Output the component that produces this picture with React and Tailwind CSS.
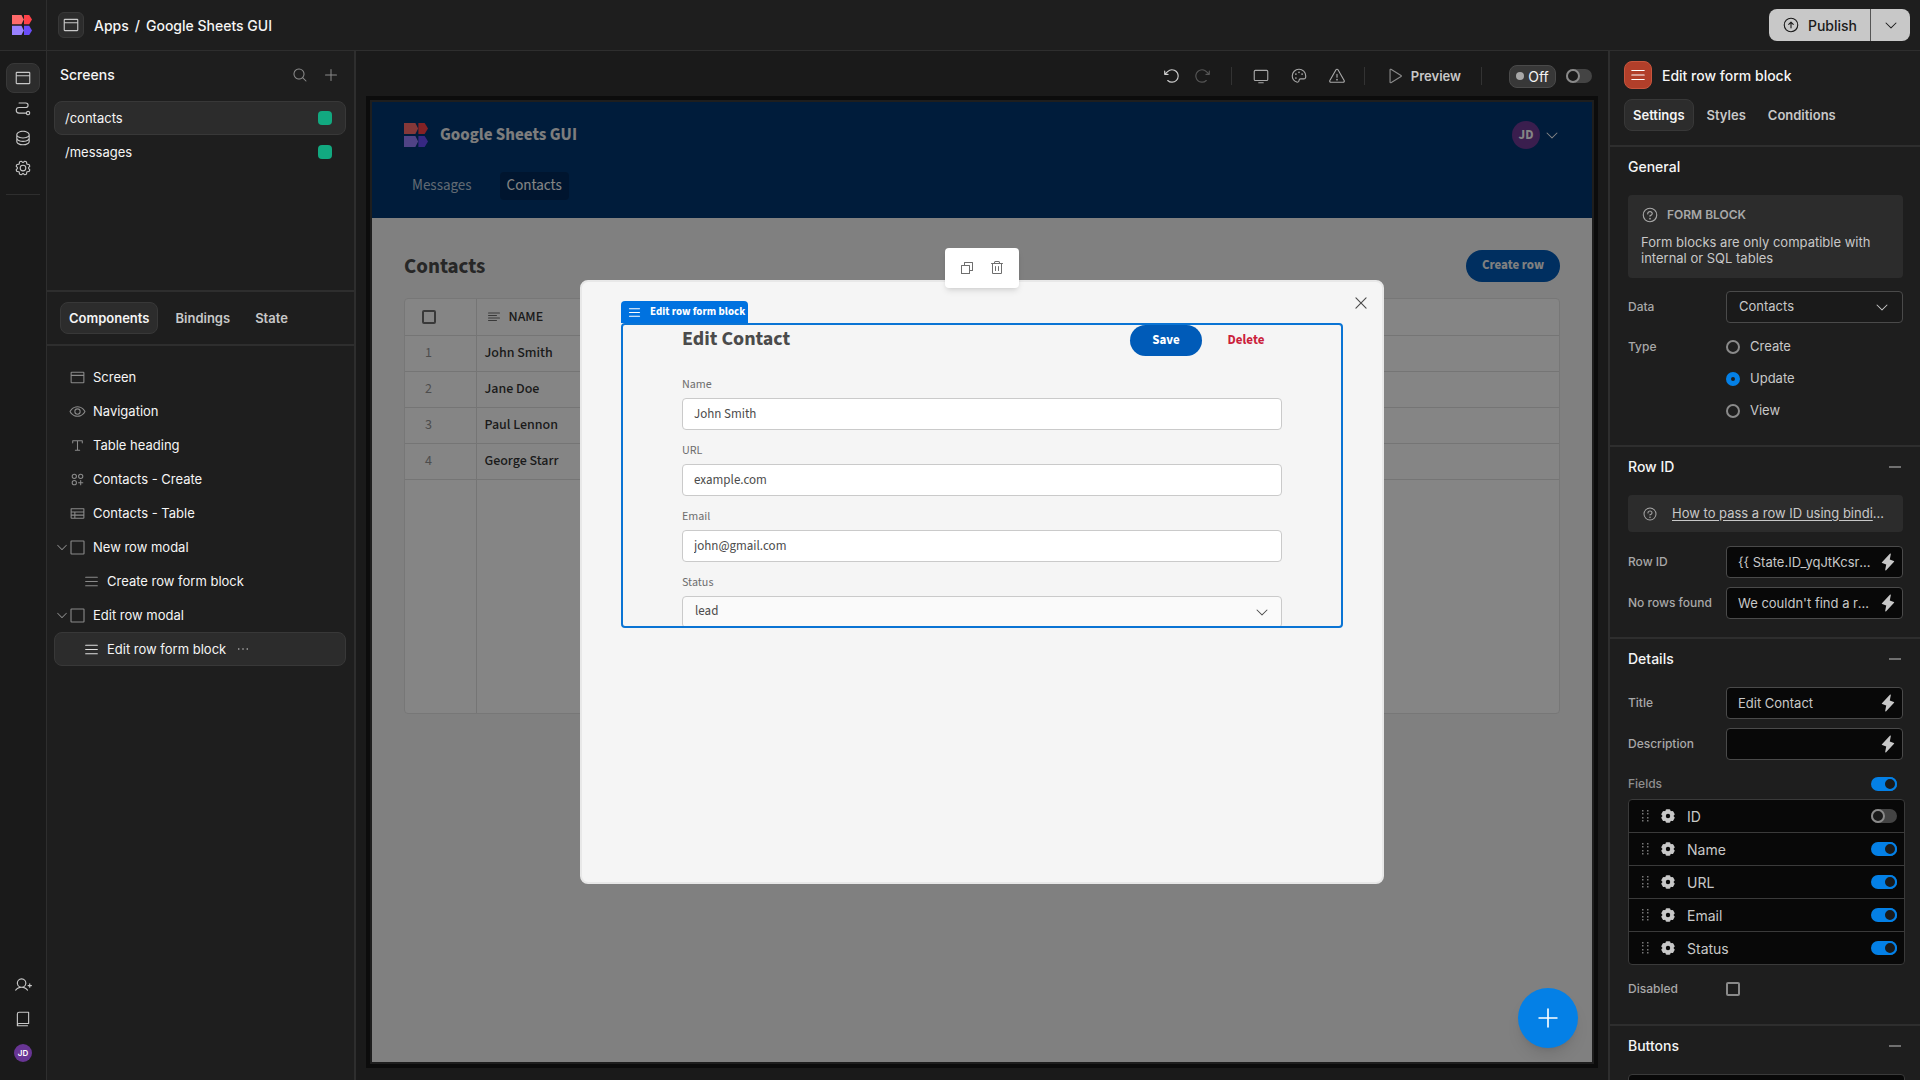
import React from 'react';
import {
  PiArrowCircleUp,
  PiArrowClockwise,
  PiArrowCounterClockwise,
  PiBook,
  PiBrowser,
  PiCaretDown,
  PiCirclesThreePlus,
  PiCopy,
  PiDatabase,
  PiDotsThree,
  PiEye,
  PiGear,
  PiLightningFill,
  PiList,
  PiMagnifyingGlass,
  PiMonitor,
  PiPalette,
  PiPath,
  PiPlay,
  PiPlus,
  PiQuestion,
  PiTable,
  PiTextAlignLeft,
  PiTextT,
  PiTrash,
  PiUserPlus,
  PiWarning,
  PiX,
} from 'react-icons/pi';

const Square = ({ className }) => (
  <svg viewBox="0 0 17 17" className={className} fill="none" stroke="currentColor" aria-hidden="true">
    <rect x="2" y="2" width="13" height="13" rx="0.5" strokeWidth="1.1" />
  </svg>
);

const screens = ['/contacts', '/messages'];

const tree = [
  { label: 'Screen', icon: PiBrowser },
  { label: 'Navigation', icon: PiEye },
  { label: 'Table heading', icon: PiTextT },
  { label: 'Contacts - Create', icon: PiCirclesThreePlus },
  { label: 'Contacts - Table', icon: PiTable },
  { label: 'New row modal', icon: Square, open: true },
  { label: 'Create row form block', icon: PiList, child: true },
  { label: 'Edit row modal', icon: Square, open: true },
  { label: 'Edit row form block', icon: PiList, child: true, selected: true },
];

const rows = ['John Smith', 'Jane Doe', 'Paul Lennon', 'George Starr'];

const formFields = [
  { id: 'name', label: 'Name', value: 'John Smith' },
  { id: 'url', label: 'URL', value: 'example.com' },
  { id: 'email', label: 'Email', value: 'john@gmail.com' },
];

const fields = [
  { name: 'ID', on: false },
  { name: 'Name', on: true },
  { name: 'URL', on: true },
  { name: 'Email', on: true },
  { name: 'Status', on: true },
];

const Logo = ({ className }) => (
  <svg viewBox="0 0 20 20" preserveAspectRatio="none" className={className} aria-hidden="true">
    <path d="M0 0h9.5l2.3 4.6-2.3 4.6H0z" fill="#ff6b6b" />
    <path d="M12 0h5.2L20 4.6l-2.8 4.6H12z" fill="#ff4148" />
    <path d="M0 10.8h9.5l2.3 4.6L9.5 20H0z" fill="#9981ff" />
    <path d="M12 10.8h5.2l2.8 4.6-2.8 4.6H12z" fill="#6a4dfa" />
  </svg>
);

const Cog = () => (
  <svg viewBox="0 0 14 14" className="h-[14px] w-[14px] text-[#c8c8c8]" aria-hidden="true">
    <g fill="currentColor">
      <rect x="4.6" y="0.2" width="4.8" height="13.6" rx="1.2" />
      <rect x="4.6" y="0.2" width="4.8" height="13.6" rx="1.2" transform="rotate(60 7 7)" />
      <rect x="4.6" y="0.2" width="4.8" height="13.6" rx="1.2" transform="rotate(120 7 7)" />
      <circle cx="7" cy="7" r="5.7" />
    </g>
    <circle cx="7" cy="7" r="2.2" fill="#080808" />
  </svg>
);

const DragHandle = () => (
  <svg viewBox="0 0 8 12" className="h-3 w-2" fill="#777777" aria-hidden="true">
    {[1, 4, 8, 11].map((y) => (
      <g key={y}>
        <rect x="1" y={y - 1} width="1.5" height="1.5" />
        <rect x="6" y={y - 1} width="1.5" height="1.5" />
      </g>
    ))}
  </svg>
);

const Toggle = ({ label, on = false }) => (
  <input
    type="checkbox"
    role="switch"
    aria-label={label}
    defaultChecked={on}
    className="flex h-[14px] w-[26px] shrink-0 appearance-none items-center rounded-full bg-[#444444] before:h-[14px] before:w-[14px] before:rounded-full before:border-2 before:border-[#8a8a8a] before:bg-[#1a1a1a] checked:justify-end checked:bg-[#0480e6] checked:before:border-[#0480e6]"
  />
);

const RailButton = ({ label, icon: Icon }) => (
  <button aria-label={label} className="flex h-[30px] w-[34px] items-center justify-center text-[#c8c8c8]">
    <Icon className="h-[18px] w-[18px]" />
  </button>
);

const Rail = () => (
  <nav className="flex w-[47px] shrink-0 flex-col items-center border-r border-[#2e2e2e] bg-[#1a1a1a] pt-3 pb-3">
    <button
      aria-label="Design"
      className="flex h-[30px] w-[34px] items-center justify-center rounded-lg border border-[#383838] bg-[#2c2c2c] text-[#c8c8c8]"
    >
      <PiBrowser className="h-[18px] w-[18px]" />
    </button>
    <RailButton label="Automations" icon={PiPath} />
    <RailButton label="Data" icon={PiDatabase} />
    <RailButton label="Settings" icon={PiGear} />
    <div className="mt-[11px] h-px w-[34px] bg-[#2e2e2e]" />
    <div className="mt-auto flex flex-col items-center gap-1">
      <RailButton label="Invite users" icon={PiUserPlus} />
      <RailButton label="Docs" icon={PiBook} />
      <button aria-label="Account" className="flex h-[30px] w-[34px] items-center justify-center">
        <span className="flex h-[18px] w-[18px] items-center justify-center rounded-full bg-[#683594] text-[8px] font-semibold text-white">
          JD
        </span>
      </button>
    </div>
  </nav>
);

const TopBar = () => (
  <header className="flex h-[51px] shrink-0 border-b border-[#2e2e2e]">
    <div className="flex w-[47px] shrink-0 items-center justify-center border-r border-[#2e2e2e]">
      <Logo className="mr-[3px] h-5 w-5" />
    </div>
    <div className="flex flex-1 items-center pr-[10px] pl-[11px]">
      <button
        aria-label="App home"
        className="flex h-[26px] w-[26px] items-center justify-center rounded-md border border-[#383838] bg-[#2c2c2c] text-[#c8c8c8]"
      >
        <PiBrowser className="h-[18px] w-[18px]" />
      </button>
      <div className="ml-[10px] flex gap-[6px] text-[14px] font-medium text-[#f5f5f5]">
        <a href="#apps">Apps</a>
        <span>/</span>
        <span>Google Sheets GUI</span>
      </div>
      <div className="ml-auto flex h-8 overflow-hidden rounded-lg bg-[#c8c8c8] text-[#1a1a1a]">
        <button className="flex w-[102px] items-center justify-center gap-2 border-r border-[#555555] text-[14px] font-medium">
          <PiArrowCircleUp className="h-[18px] w-[18px]" />
          Publish
        </button>
        <button aria-label="Publish options" className="flex w-[39px] items-center justify-center">
          <PiCaretDown className="h-4 w-4" />
        </button>
      </div>
    </div>
  </header>
);

const LeftPanel = () => (
  <aside className="flex w-[309px] shrink-0 flex-col border-r-2 border-[#2e2e2e]">
    <section className="h-[241px] border-b-2 border-[#2e2e2e] pr-2 pl-[7px]">
      <div className="mb-[3px] flex h-[47px] items-center pr-[7px] pl-[6px]">
        <h2 className="text-[14px] font-medium text-[#f5f5f5]">Screens</h2>
        <button aria-label="Search screens" className="ml-auto text-[#8a8a8a]">
          <PiMagnifyingGlass className="h-4 w-4" />
        </button>
        <button aria-label="Add screen" className="ml-[15px] text-[#8a8a8a]">
          <PiPlus className="h-4 w-4" />
        </button>
      </div>
      {screens.map((screen, i) => (
        <a
          key={screen}
          href="#screen"
          className={`flex h-[34px] items-center justify-between rounded-lg border pr-[13px] pl-[10px] text-[13px] leading-5 text-[#f5f5f5] ${
            i === 0 ? 'border-[#383838] bg-[#2c2c2c]' : 'border-transparent'
          }`}
        >
          {screen}
          <span className="h-[14px] w-[14px] rounded bg-[#12a980]" />
        </a>
      ))}
    </section>
    <div className="flex h-[54px] shrink-0 items-center gap-[10px] border-b-2 border-[#2e2e2e] pl-[13px] text-[13px] leading-5 font-semibold">
      <button className="h-8 rounded-lg border border-[#383838] bg-[#2c2c2c] px-2 text-[#f5f5f5]">Components</button>
      <button className="h-8 px-[7px] text-[#c8c8c8]">Bindings</button>
      <button className="h-8 px-2 text-[#c8c8c8]">State</button>
    </div>
    <div className="pt-[14px] pr-2 pl-[7px]">
      {tree.map(({ label, icon: Icon, open, child, selected }) => (
        <div
          key={label}
          className={`flex h-[34px] items-center rounded-lg border text-[13px] leading-5 text-[#f5f5f5] ${
            selected ? 'border-[#383838] bg-[#2c2c2c]' : 'border-transparent'
          } ${child ? 'pl-[14px]' : ''}`}
        >
          <span className="flex w-[14px] justify-center text-[#8a8a8a]">
            {open && <PiCaretDown className="h-[14px] w-[14px]" />}
          </span>
          <Icon className={`h-[17px] w-[17px] ${selected ? 'text-[#e0e0e0]' : 'text-[#8a8a8a]'}`} />
          <span className="ml-[7px]">{label}</span>
          {selected && (
            <button aria-label="More" className="ml-[9px] text-[#c8c8c8]">
              <PiDotsThree className="h-4 w-4" />
            </button>
          )}
        </div>
      ))}
    </div>
  </aside>
);

const CanvasToolbar = () => (
  <div className="flex h-[45px] shrink-0 items-center justify-end pt-[5px] pr-4 text-[#a8a8a8]">
    <button aria-label="Undo" className="text-[#d0d0d0]">
      <PiArrowCounterClockwise className="h-[18px] w-[18px]" />
    </button>
    <button aria-label="Redo" className="ml-3 text-[#555555]">
      <PiArrowClockwise className="h-[18px] w-[18px]" />
    </button>
    <div className="mx-5 h-[18px] w-px bg-[#333333]" />
    <div className="flex gap-5">
      <button aria-label="Device preview"><PiMonitor className="h-[18px] w-[18px]" /></button>
      <button aria-label="Theme"><PiPalette className="h-[18px] w-[18px]" /></button>
      <button aria-label="Errors"><PiWarning className="h-[18px] w-[18px]" /></button>
    </div>
    <div className="mr-5 ml-[18px] h-[18px] w-px bg-[#333333]" />
    <button className="flex items-center gap-2 text-[13px] leading-5 font-semibold text-[#c8c8c8]">
      <PiPlay className="h-[18px] w-[18px] text-[#8a8a8a]" />
      Preview
    </button>
    <div className="mr-[27px] ml-5 h-[18px] w-px bg-[#333333]" />
    <span className="flex h-[23px] w-[47px] items-center justify-center gap-1 rounded-lg border border-[#4a4a4a] bg-[#383838] text-[14px] text-[#f5f5f5]">
      <span className="h-2 w-2 rounded-full bg-[#a8a8a8]" />
      Off
    </span>
    <div className="ml-[10px] flex"><Toggle label="Development data" /></div>
  </div>
);

const ContactsTable = () => (
  <div className="mt-4 h-[416px] overflow-hidden rounded border border-[#e4e4e4] bg-white">
    <table className="h-full w-full border-collapse text-left text-[14px] leading-5 text-[#323232]">
      <thead>
        <tr className="h-9 border-b border-[#e1e1e1]">
          <th className="w-[71px] border-r border-[#e1e1e1] pl-[17px]">
            <input
              type="checkbox"
              aria-label="Select all rows"
              className="block h-[14px] w-[14px] appearance-none rounded-[2px] border-2 border-[#6e6e6e]"
            />
          </th>
          <th className="pl-[9px] font-medium">
            <span className="flex items-center gap-[7px]">
              <PiTextAlignLeft className="h-4 w-4 text-[#6e6e6e]" />
              NAME
            </span>
          </th>
        </tr>
      </thead>
      <tbody>
        {rows.map((name, i) => (
          <tr key={name} className="h-9 border-b border-[#e1e1e1]">
            <td className="border-r border-[#e1e1e1] pl-5 text-[#959595]">{i + 1}</td>
            <td className="pl-2 font-medium">{name}</td>
          </tr>
        ))}
        <tr>
          <td className="border-r border-[#e1e1e1]" />
          <td />
        </tr>
      </tbody>
    </table>
  </div>
);

const EditModal = () => (
  <div role="dialog" aria-label="Edit row modal" className="relative mt-[178px] h-[604px] w-[804px] rounded-lg border-2 border-[#e8e8e8] bg-[#f5f5f5]">
    <div className="absolute -top-[34px] left-1/2 flex h-10 w-[74px] -translate-x-1/2 items-center justify-center gap-[14px] rounded bg-white text-[#6e6e6e] shadow-md">
      <button aria-label="Duplicate"><PiCopy className="h-4 w-4" /></button>
      <button aria-label="Delete component"><PiTrash className="h-4 w-4" /></button>
    </div>
    <button aria-label="Close" className="absolute top-3 right-3 text-[#4b4b4b]">
      <PiX className="h-[18px] w-[18px]" />
    </button>
    <div className="mx-[39px] mt-[41px] h-[305px] rounded border-2 border-[#0a74d4]">
      <div className="absolute top-[19px] left-[39px] flex h-[22px] items-center gap-2 rounded-t bg-[#0072e0] pr-[3px] pl-[6px] text-[11px] leading-[22px] font-bold text-white">
        <PiList className="h-[15px] w-[15px]" />
        Edit row form block
      </div>
      <form className="h-full overflow-hidden px-[59px]">
        <div className="flex h-[31px]">
          <h3 className="flex-1 text-[20px] leading-7 font-bold text-[#4b4b4b]">Edit Contact</h3>
          <button type="button" className="w-[72px] rounded-full bg-[#005bb8] pb-[2px] text-[13px] leading-5 font-bold text-white">Save</button>
          <button type="button" className="ml-2 w-[72px] pb-[2px] text-[13px] leading-5 font-bold text-[#cb1f3c]">Delete</button>
        </div>
        <div className="mt-[18px] flex flex-col gap-[10px]">
          {formFields.map((field) => (
            <div key={field.id}>
              <label htmlFor={field.id} className="block h-6 text-[12px] leading-[22px] text-[#6e6e6e]">{field.label}</label>
              <input
                id={field.id}
                defaultValue={field.value}
                className="block h-8 w-full rounded border border-[#cacaca] bg-white px-[11px] text-[13px] text-[#4b4b4b]"
              />
            </div>
          ))}
          <div>
            <label htmlFor="status" className="block h-6 text-[12px] leading-[22px] text-[#6e6e6e]">Status</label>
            <div className="relative">
              <select
                id="status"
                className="block h-8 w-full appearance-none rounded border border-[#cacaca] bg-[#fafafa] px-3 text-[13px] text-[#4b4b4b]"
              >
                <option>lead</option>
              </select>
              <PiCaretDown className="pointer-events-none absolute top-2 right-3 h-4 w-4 text-[#4b4b4b]" />
            </div>
          </div>
        </div>
      </form>
    </div>
  </div>
);

const Canvas = () => (
  <main className="flex min-w-0 flex-1 flex-col bg-[#1a1a1a]">
    <CanvasToolbar />
    <div className="mx-[10px] mb-3 flex flex-1 border-4 border-[#0c0c0c] bg-[#1e1e1e] p-[2px]">
      <div className="relative flex-1 overflow-hidden bg-[#f5f5f5] font-['Source_Sans_3','Noto_Sans_CJK_SC',sans-serif]">
        <div className="h-[116px] bg-[#003671] px-8 pt-[18px] text-white">
          <div className="flex h-[30px] items-center">
            <Logo className="h-6 w-6" />
            <h1 className="ml-3 text-[17px] leading-[30px] font-bold text-[#f0f0f0]">Google Sheets GUI</h1>
            <button aria-label="User menu" className="ml-auto flex items-center gap-1">
              <span className="flex h-7 w-7 items-center justify-center rounded-full bg-[#6f3a96] text-[13px] leading-7 font-bold">JD</span>
              <PiCaretDown className="h-4 w-4" />
            </button>
          </div>
          <nav className="mt-[22px] flex gap-5 text-[15px] leading-7">
            <a href="#messages" className="px-2 text-[#bccbdc]">Messages</a>
            <a href="#contacts" className="rounded bg-[#002a5a] px-[7px]">Contacts</a>
          </nav>
        </div>
        <div className="px-8 pt-8">
          <div className="flex h-8 items-center justify-between">
            <h2 className="text-[21px] leading-8 font-bold text-[#4b4b4b]">Contacts</h2>
            <button className="h-8 w-[94px] rounded-full bg-[#005bb8] pb-[2px] text-[13px] leading-5 font-bold text-[#f5f5f5]">Create row</button>
          </div>
          <ContactsTable />
        </div>
        <div className="absolute inset-0 flex items-start justify-center bg-black/48">
          <EditModal />
        </div>
        <button
          aria-label="Add component"
          className="absolute right-[14px] bottom-[14px] flex h-[60px] w-[60px] items-center justify-center rounded-full bg-[#0480e6] text-white shadow-lg"
        >
          <PiPlus className="h-[26px] w-[26px]" />
        </button>
      </div>
    </div>
  </main>
);

const Section = ({ title, children, collapsible = true, className }) => (
  <section className={`border-b-2 border-[#2e2e2e] pr-[17px] pl-[18px] ${className}`}>
    <div className="flex h-10 items-center justify-between">
      <h3 className="text-[14px] leading-5 font-medium text-[#f5f5f5]">{title}</h3>
      {collapsible && (
        <button aria-label={`Collapse ${title}`} className="flex h-4 w-4 items-center justify-center">
          <span className="h-[2px] w-3 bg-[#707070]" />
        </button>
      )}
    </div>
    {children}
  </section>
);

const BindableInput = ({ id, label, value }) => (
  <div className="flex h-8 items-center">
    <label htmlFor={id} className="w-[98px] shrink-0 text-[12px] font-medium text-[#a8a8a8]">{label}</label>
    <div className="flex h-full min-w-0 flex-1 items-center rounded border border-[#4a4a4a] bg-[#080808] pr-[5px]">
      <input id={id} defaultValue={value} className="h-full min-w-0 flex-1 truncate bg-transparent pl-[11px] text-[13px] text-[#c8c8c8]" />
      <button aria-label={`Bind ${label}`} className="ml-2 text-[#c8c8c8]">
        <PiLightningFill className="h-[18px] w-[18px]" />
      </button>
    </div>
  </div>
);

const RightPanel = () => (
  <aside className="flex w-[312px] shrink-0 flex-col overflow-hidden border-l-2 border-[#2e2e2e]">
    <div className="h-24 shrink-0 border-b-2 border-[#2e2e2e] px-[14px] pt-[10px]">
      <div className="flex h-7 items-center">
        <span className="flex h-7 w-7 items-center justify-center rounded-lg border border-[#c8553d] bg-[#b23f2a] text-white">
          <PiList className="h-[18px] w-[18px]" />
        </span>
        <h2 className="ml-[10px] text-[14px] font-medium text-[#f5f5f5]">Edit row form block</h2>
      </div>
      <div className="mt-[10px] flex gap-1 text-[13px] leading-5 font-semibold">
        <button className="h-8 rounded-lg border border-[#383838] bg-[#2c2c2c] px-2 text-[#f5f5f5]">Settings</button>
        <button className="h-8 px-[9px] text-[#c8c8c8]">Styles</button>
        <button className="h-8 px-[9px] text-[#c8c8c8]">Conditions</button>
      </div>
    </div>

    <Section title="General" collapsible={false} className="h-[300px] shrink-0">
      <div className="mt-2 rounded bg-[#2c2c2c] px-[13px] pt-[11px] pb-3">
        <p className="flex items-center gap-2 text-[12px] font-semibold text-[#a8a8a8]">
          <PiQuestion className="h-[18px] w-[18px]" />
          FORM BLOCK
        </p>
        <p className="mt-[10px] text-[13px] leading-4 text-[#c8c8c8]">Form blocks are only compatible with internal or SQL tables</p>
      </div>
      <div className="mt-[13px] flex h-8 items-center">
        <label htmlFor="data" className="w-[98px] shrink-0 text-[12px] font-medium text-[#a8a8a8]">Data</label>
        <div className="relative flex-1">
          <select id="data" className="block h-8 w-full appearance-none rounded border border-[#4a4a4a] bg-[#1a1a1a] px-3 text-[13px] text-[#c8c8c8]">
            <option>Contacts</option>
          </select>
          <PiCaretDown className="pointer-events-none absolute top-2 right-[13px] h-4 w-4 text-[#c8c8c8]" />
        </div>
      </div>
      <fieldset className="mt-2 flex">
        <legend className="float-left w-[98px] text-[12px] leading-8 font-medium text-[#a8a8a8]">Type</legend>
        <div>
          {['Create', 'Update', 'View'].map((type) => (
            <label key={type} className="flex h-8 items-center gap-[10px] text-[13px] text-[#c8c8c8]">
              <input
                type="radio"
                name="type"
                defaultChecked={type === 'Update'}
                className="h-[14px] w-[14px] appearance-none rounded-full border-2 border-[#8a8a8a] checked:border-5 checked:border-[#0480e6]"
              />
              {type}
            </label>
          ))}
        </div>
      </fieldset>
    </Section>

    <Section title="Row ID" className="h-48 shrink-0">
      <div className="mt-2 flex h-[37px] items-center rounded bg-[#2c2c2c] px-[14px]">
        <PiQuestion className="h-4 w-4 shrink-0 text-[#a8a8a8]" />
        <p className="mr-1 ml-[14px] truncate text-[13px] text-[#c8c8c8]">
          <a href="#docs" className="underline underline-offset-2">How to pass a row ID using bindings</a>
        </p>
      </div>
      <div className="mt-[14px] flex flex-col gap-[9px]">
        <BindableInput id="row-id" label="Row ID" value="{{ State.ID_yqJtKcsrowId }}" />
        <BindableInput id="no-rows" label="No rows found" value="We couldn't find a row to display" />
      </div>
    </Section>

    <Section title="Details" className="h-[387px] shrink-0">
      <div className="mt-2 flex flex-col gap-[9px]">
        <BindableInput id="title" label="Title" value="Edit Contact" />
        <BindableInput id="description" label="Description" value="" />
      </div>
      <div className="mt-2 flex h-[31px] items-center justify-between pr-[6px]">
        <span className="text-[12px] font-medium text-[#8e8e8e]">Fields</span>
        <Toggle label="All fields" on />
      </div>
      <ul className="-mr-[2px] divide-y divide-[#3a3a3a] rounded border border-[#3a3a3a] bg-[#080808]">
        {fields.map((field) => (
          <li key={field.name} className="flex h-8 items-center pr-[7px] pl-3 [&:not(:last-child)]:h-[33px]">
            <DragHandle />
            <button aria-label={`Edit ${field.name}`} className="ml-3"><Cog /></button>
            <span className="ml-3 flex-1 text-[14px] text-[#c8c8c8]">{field.name}</span>
            <Toggle label={field.name} on={field.on} />
          </li>
        ))}
      </ul>
      <div className="mt-2 flex h-8 items-center">
        <label htmlFor="disabled" className="w-[98px] text-[12px] font-medium text-[#a8a8a8]">Disabled</label>
        <input id="disabled" type="checkbox" className="h-[14px] w-[14px] appearance-none rounded-[2px] border-2 border-[#8a8a8a]" />
      </div>
    </Section>

    <Section title="Buttons" className="shrink-0">
      <div className="mt-2 -mr-[2px] h-10 rounded border border-[#3a3a3a] bg-[#080808]" />
    </Section>
  </aside>
);

const App = () => (
  <div className="flex h-screen flex-col overflow-hidden bg-[#1e1e1e] font-['Inter',sans-serif]">
    <TopBar />
    <div className="flex min-h-0 flex-1">
      <Rail />
      <LeftPanel />
      <Canvas />
      <RightPanel />
    </div>
  </div>
);

export default App;
